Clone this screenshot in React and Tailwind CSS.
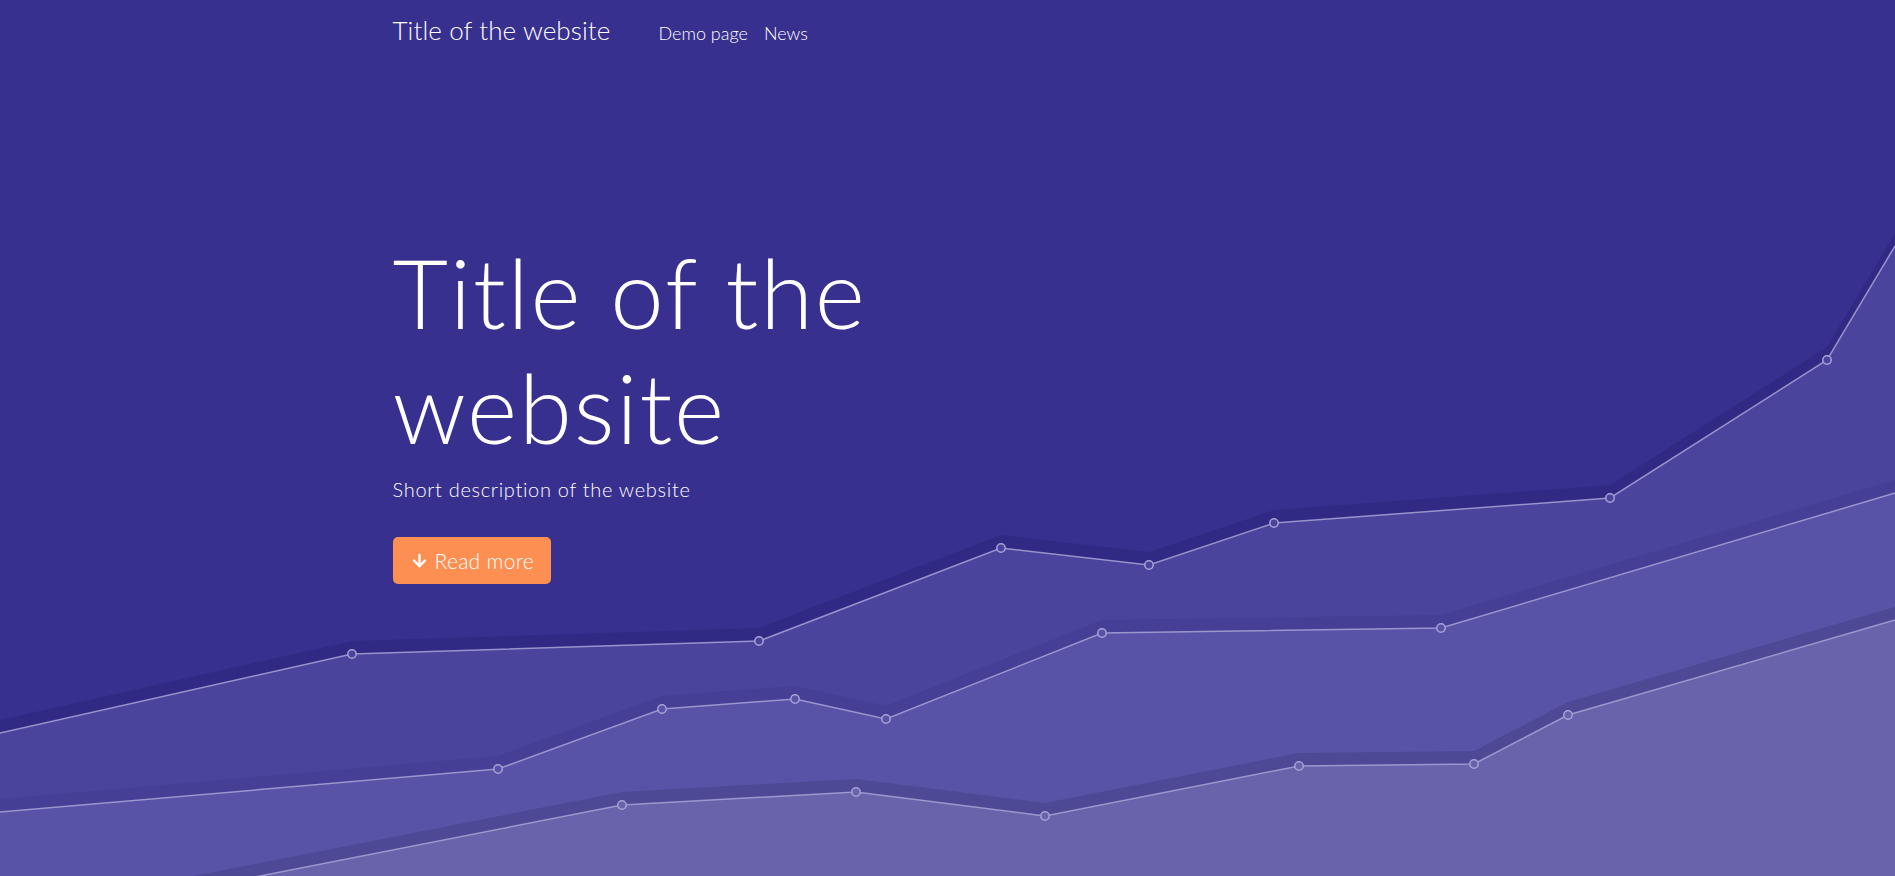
import { ArrowDown } from 'lucide-react'

const series = [
  {
    shadow: '#312a85',
    fill: '#4a449c',
    points: [
      [0, 733],
      [352, 654],
      [759, 641],
      [1001, 548],
      [1149, 565],
      [1274, 523],
      [1610, 498],
      [1827, 360],
      [1895, 246],
    ],
  },
  {
    shadow: '#453f96',
    fill: '#5853a6',
    points: [
      [0, 812],
      [498, 769],
      [662, 709],
      [795, 699],
      [886, 719],
      [1102, 633],
      [1441, 628],
      [1895, 493],
    ],
  },
  {
    shadow: '#4e4995',
    fill: '#6863ab',
    points: [
      [0, 927],
      [622, 805],
      [856, 792],
      [1045, 816],
      [1299, 766],
      [1474, 764],
      [1568, 715],
      [1895, 620],
    ],
  },
]

function toPath(points, dy = 0) {
  const line = points.map(([x, y]) => `${x},${y + dy}`).join(' L')
  return `M${line} L1895,900 L0,900 Z`
}

function Chart() {
  return (
    <svg
      className="absolute inset-0"
      width="1895"
      height="876"
      viewBox="0 0 1895 876"
      preserveAspectRatio="none"
    >
      {series.map((s, i) => (
        <g key={i}>
          <path d={toPath(s.points, -13)} fill={s.shadow} />
          <path d={toPath(s.points)} fill={s.fill} />
          <polyline
            points={s.points.map(([x, y]) => `${x},${y}`).join(' ')}
            fill="none"
            stroke="#a7a3d6"
            strokeOpacity="0.85"
            strokeWidth="1.5"
          />
          {s.points
            .filter(([x, y]) => x > 0 && x < 1895 && y < 876)
            .map(([x, y]) => (
              <circle
                key={x}
                cx={x}
                cy={y}
                r="4.2"
                fill={s.fill}
                stroke="#a7a3d6"
                strokeWidth="1.5"
              />
            ))}
        </g>
      ))}
    </svg>
  )
}

export default function App() {
  return (
    <div className="relative h-[876px] w-full overflow-hidden bg-[#38308f] font-['Lato',sans-serif] font-light text-white">
      <Chart />

      <div className="relative mx-auto max-w-[1140px] px-[15px]">
        {/* Navbar */}
        <nav className="flex items-baseline pt-[11px]">
          <a href="#" className="mr-[48px] text-[26px] leading-[39px] tracking-[0.1px]">
            Title of the website
          </a>
          <div className="flex items-baseline gap-[16px] text-[18px] leading-[27px]">
            <a href="#">Demo page</a>
            <a href="#">News</a>
          </div>
        </nav>

        {/* Hero */}
        <div className="mt-[184px]">
          <h1 className="text-[96px] leading-[1.2] tracking-[1.8px]">
            Title of the
            <br />
            website
          </h1>
          <p className="mt-[10px] text-[20px] leading-[30px] tracking-[0.7px]">
            Short description of the website
          </p>
          <a
            href="#"
            className="mt-[33px] inline-flex h-[47px] items-center gap-[6px] rounded-[5px] bg-[#fd8f52] px-[17px] text-[21px] tracking-[0.3px]"
          >
            <ArrowDown size={19} strokeWidth={3} />
            Read more
          </a>
        </div>
      </div>
    </div>
  )
}
